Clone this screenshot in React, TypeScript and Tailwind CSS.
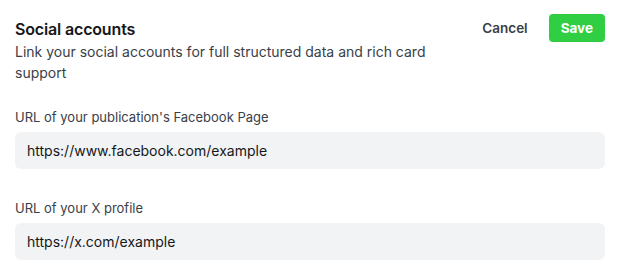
export default function App() {
  return (
    <div className="w-[620px] h-[280px] bg-white px-[15px] pt-[14px] font-['Inter',sans-serif] text-[#15171a]">
      {/* header */}
      <div className="flex items-start justify-between">
        <div className="w-[440px]">
          <h2 className="text-[16px] leading-[24px] font-semibold tracking-[-0.01em] mt-[3px]">Social accounts</h2>
          <p className="text-[14px] leading-[21px] text-[#394047]">
            Link your social accounts for full structured data and rich card support
          </p>
        </div>
        <div className="flex items-center gap-[21px]">
          <button className="text-[13.5px] font-semibold text-[#394047]">Cancel</button>
          <button className="h-[28px] px-[12px] rounded-[4px] bg-[#30cf43] text-white text-[13.5px] font-bold">Save</button>
        </div>
      </div>

      {/* fields */}
      <div className="mt-[25px] flex flex-col gap-[30px]">
        <div>
          <label className="block text-[13px] leading-[18px] text-[#394047] mb-[6px]">URL of your publication's Facebook Page</label>
          <div className="h-[37px] rounded-[6px] bg-[#f2f3f5] flex items-center px-[12px] text-[14px] text-[#15171a]">
            https://www.facebook.com/example
          </div>
        </div>
        <div>
          <label className="block text-[13px] leading-[18px] text-[#394047] mb-[6px]">URL of your X profile</label>
          <div className="h-[37px] rounded-[6px] bg-[#f2f3f5] flex items-center px-[12px] text-[14px] text-[#15171a]">
            https://x.com/example
          </div>
        </div>
      </div>
    </div>
  )
}
